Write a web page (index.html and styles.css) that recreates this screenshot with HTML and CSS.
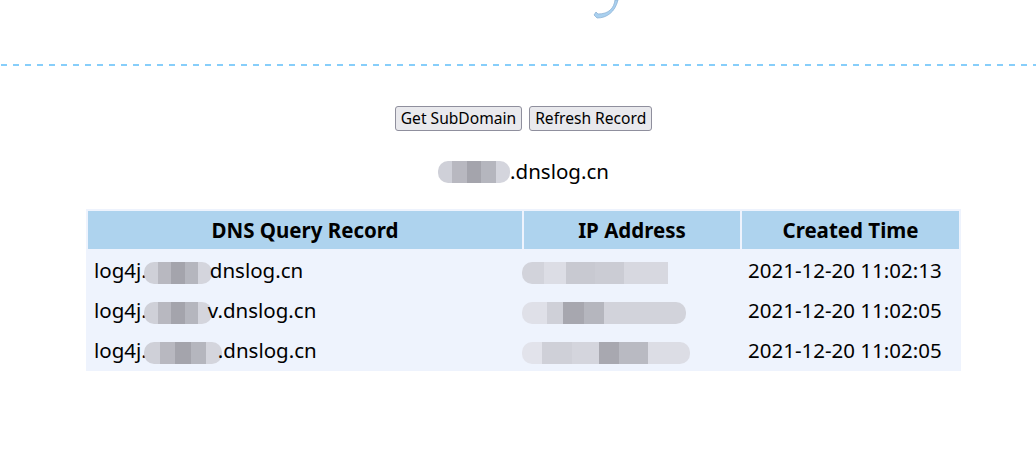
FILE: index.html
```html
<!DOCTYPE html>
<html>
<head>
<meta charset="utf-8">
<link rel="stylesheet" href="styles.css">
</head>
<body>
<div class="top">
  <svg class="logo" width="40" height="20" viewBox="0 0 40 20">
    <path d="M30 0 C29 8 24 14 13 14 L11 12 L9 15 L12 18 C22 18 30 12 33 0 Z" fill="#a9d0ef" stroke="#8fb4d6" stroke-width="0.8"/>
  </svg>
</div>
<div class="divider"></div>
<main class="wrap">
  <div class="actions">
    <button class="btn">Get SubDomain</button>
    <button class="btn">Refresh Record</button>
  </div>
  <div class="domain"><span class="mask m-domain"></span>.dnslog.cn</div>
  <table class="records">
    <thead>
      <tr><th class="c1">DNS Query Record</th><th class="c2">IP Address</th><th class="c3">Created Time</th></tr>
    </thead>
    <tbody>
      <tr><td>log4j.<span class="mask m-a"></span>dnslog.cn</td><td><span class="mask ip ip1"></span></td><td>2021-12-20 11:02:13</td></tr>
      <tr><td>log4j.<span class="mask m-b"></span>v.dnslog.cn</td><td><span class="mask ip ip2"></span></td><td>2021-12-20 11:02:05</td></tr>
      <tr><td>log4j.<span class="mask m-c"></span>.dnslog.cn</td><td><span class="mask ip ip3"></span></td><td>2021-12-20 11:02:05</td></tr>
    </tbody>
  </table>
</main>
</body>
</html>
```
FILE: styles.css
```css
html, body { margin: 0; padding: 0; background: #fff; }
body { font-family: "Noto Sans", "Open Sans", sans-serif; color: #000; }
.top { height: 64px; padding-left: 585px; overflow: hidden; }
.logo { display: block; }
.divider {
  height: 2px;
  background: repeating-linear-gradient(90deg, transparent 0 1px, #87cefa 1px 7px, transparent 7px 12px);
}
.wrap { width: 875px; margin-left: 86px; }
.actions { display: flex; justify-content: center; gap: 7px; padding-top: 40px; }
.btn {
  font-family: "Noto Sans", sans-serif;
  font-size: 15.6px;
  height: 25px;
  padding: 0 5px;
  line-height: 21px;
  background: #e9e9ed;
  border: 1px solid #8f8f9d;
  border-radius: 3px;
  color: #000;
}
.domain { text-align: center; font-size: 20.5px; margin-top: 26px; line-height: 28px; height: 28px; }
.records {
  margin-top: 24px;
  width: 875px;
  border-collapse: separate;
  border-spacing: 2px;
  background: #eef3fd;
  font-size: 20.5px;
}
.records th {
  background: #aed3ee;
  height: 38px;
  padding: 0;
  font-weight: bold;
  font-size: 20.5px;
}
.c1 { width: 434px; }
.c2 { width: 216px; }
.records td { height: 38px; padding: 0 0 0 6px; white-space: nowrap; }
.mask {
  display: inline-block;
  vertical-align: middle;
  height: 22px;
  border-radius: 10px;
  background: linear-gradient(90deg, #cfd0d8 0 20%, #b8b8c0 20% 40%, #a4a4ac 40% 60%, #b5b6be 60% 80%, #d4d5dd 80% 100%);
}
.m-domain { width: 72px; margin-bottom: 3px; }
.m-a { width: 68px; margin: 0 -2px 0 -3px; }
.m-b { width: 68px; margin: 0 -4px 0 -3px; }
.m-c { width: 78px; margin: 0 -4px 0 -3px; }
.ip { margin-left: -8px; background: linear-gradient(90deg, #d2d3db 0 15%, #dcdde5 15% 30%, #c8c9d1 30% 50%, #cbccd4 50% 70%, #d7d8e0 70% 100%); }
.ip1 { width: 146px; border-radius: 10px 0 0 10px; }
.ip2 { width: 164px; background: linear-gradient(90deg, #dfe0e8 0 15%, #cfd0d8 15% 25%, #a7a7af 25% 38%, #b5b6be 38% 50%, #d2d3db 50% 100%); }
.ip3 { width: 168px; background: linear-gradient(90deg, #e2e3eb 0 12%, #cfd0d8 12% 30%, #d4d5dd 30% 46%, #a8a8b0 46% 58%, #b9bac2 58% 75%, #dcdde5 75% 100%); }
```
